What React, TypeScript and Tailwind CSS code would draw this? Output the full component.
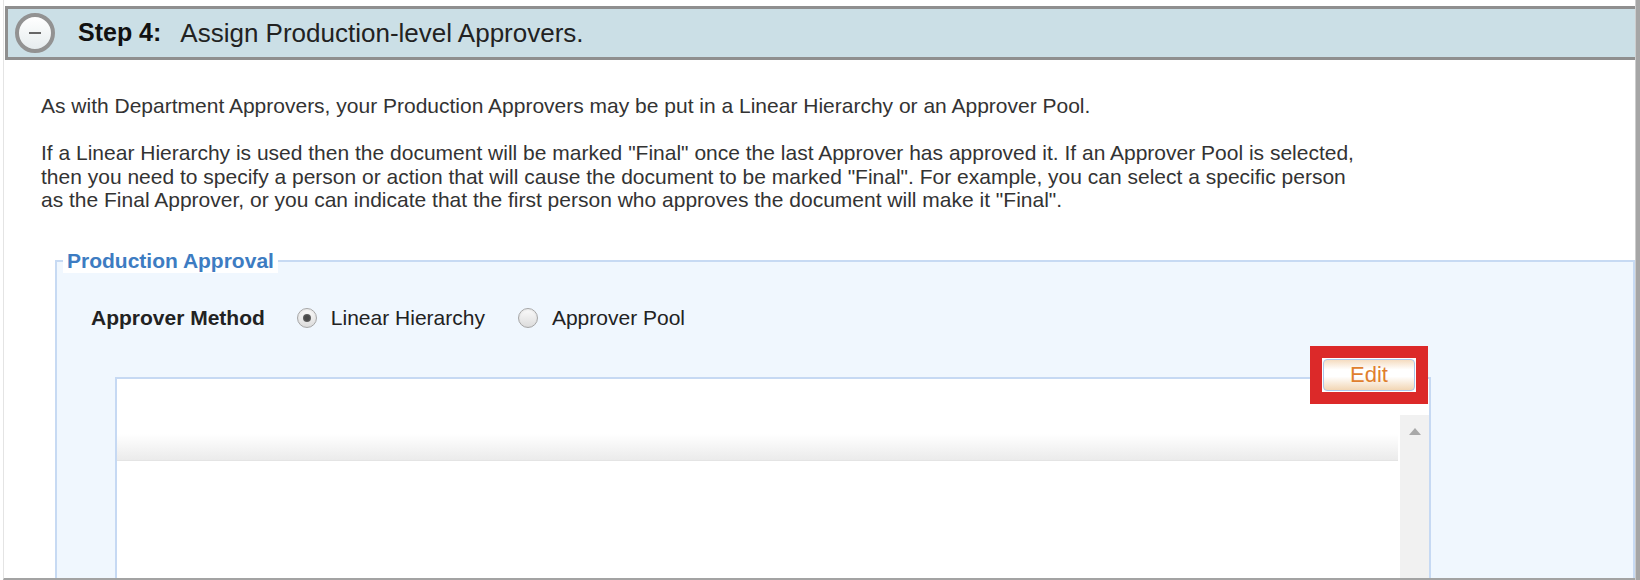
import React from "react";

function CollapseIcon() {
  return (
    <span className="w-[40px] h-[40px] rounded-full border-[4px] border-[#929292] bg-[linear-gradient(to_bottom,#ffffff,#e6ecee)] flex items-center justify-center shrink-0">
      <span className="w-[12px] h-[2px] bg-[#666]" />
    </span>
  );
}

function Radio({ checked }: { checked?: boolean }) {
  return (
    <span className="w-[20px] h-[20px] rounded-full border border-[#a6a6a6] bg-[linear-gradient(to_bottom,#fbfbfb,#dcdcdc)] shadow-[inset_0_1px_2px_rgba(0,0,0,0.08)] flex items-center justify-center shrink-0">
      {checked && <span className="w-[8px] h-[8px] rounded-full bg-[radial-gradient(circle,#4a4a4a_40%,#7a7a7a_100%)]" />}
    </span>
  );
}

function Header() {
  return (
    <div className="ml-[1px] h-[54px] shrink-0 border-t-[3px] border-b-[3px] border-l-[3px] border-[#8f8f8f] bg-[#cbdfe6] flex items-center pl-[7px]">
      <CollapseIcon />
      <span className="ml-[23px] text-[25px] font-bold text-[#111]">Step 4:</span>
      <span className="ml-[19px] text-[26px] text-[#222]">Assign Production-level Approvers.</span>
    </div>
  );
}

function ApproverGrid() {
  return (
    <div className="relative mt-[47px] ml-[24px] w-[1316px] h-[260px] border-2 border-[#c6d9f3] bg-white flex flex-col">
      {/* toolbar strip */}
      <div className="h-[36px] shrink-0" />
      <div className="flex flex-1">
        <div className="flex-1 pt-[19px]">
          <div className="h-[27px] bg-[linear-gradient(to_bottom,#ffffff,#ebebeb)] border-b border-[#e4e4e4]" />
        </div>
        <div className="w-[29px] ml-[2px] bg-[#f1f1f1] flex justify-center pt-[13px]">
          <svg width="12" height="7" viewBox="0 0 12 7">
            <polygon points="6,0 12,7 0,7" fill="#a9a9a9" />
          </svg>
        </div>
      </div>
      {/* highlighted Edit action */}
      <div className="absolute right-[1px] top-[-33px] w-[118px] h-[58px] border-[12px] border-[#dc2929] bg-white p-[1px]">
        <button className="w-full h-full rounded-[4px] border border-[#a9c8ec] bg-[linear-gradient(to_bottom,#f5dcc0_0%,#ffffff_32%,#ffffff_55%,#f2d6b4_100%)] text-[#e07f2e] text-[22px] leading-none flex items-center justify-center">
          Edit
        </button>
      </div>
    </div>
  );
}

function Body() {
  return (
    <div className="flex-1 min-h-0 overflow-hidden flex flex-col pl-[37px] pt-[34px] text-[21px] leading-[23.5px] text-[#333]">
      <p>As with Department Approvers, your Production Approvers may be put in a Linear Hierarchy or an Approver Pool.</p>
      <p className="mt-[23.5px]">
        If a Linear Hierarchy is used then the document will be marked "Final" once the last Approver has approved it. If an Approver Pool is selected,
        <br />
        then you need to specify a person or action that will cause the document to be marked "Final". For example, you can select a specific person
        <br />
        as the Final Approver, or you can indicate that the first person who approves the document will make it "Final".
      </p>
      <fieldset className="mt-[37px] ml-[14px] m-0 p-0 min-w-0 flex-1 border-2 border-[#c7daf3] bg-[#f0f7fe]">
        <legend className="ml-[6px] px-[4px] bg-white text-[21px] leading-[24px] font-bold text-[#3d7cc2]">
          Production Approval
        </legend>
        <div className="pl-[34px] pt-[33px]">
          <div className="flex items-center h-[24px]">
            <span className="font-bold text-[#222]">Approver Method</span>
            <span className="ml-[32px]"><Radio checked /></span>
            <span className="ml-[14px] text-[#222]">Linear Hierarchy</span>
            <span className="ml-[33px]"><Radio /></span>
            <span className="ml-[14px] text-[#222]">Approver Pool</span>
          </div>
          <ApproverGrid />
        </div>
      </fieldset>
    </div>
  );
}

export default function App() {
  return (
    <div className="w-[1640px] h-[580px] bg-white flex overflow-hidden font-['Liberation_Sans',Arial,sans-serif]">
      <div className="flex-1 min-w-0 h-[580px] ml-[3px] border-l border-l-[#e4e4e4] border-b-2 border-b-[#a3a3a3] pt-[6px] flex flex-col">
        <Header />
        <Body />
      </div>
      <div className="w-[5px] h-full bg-[#a6a6a6] border-l border-l-[#cdcdcd]" />
    </div>
  );
}
